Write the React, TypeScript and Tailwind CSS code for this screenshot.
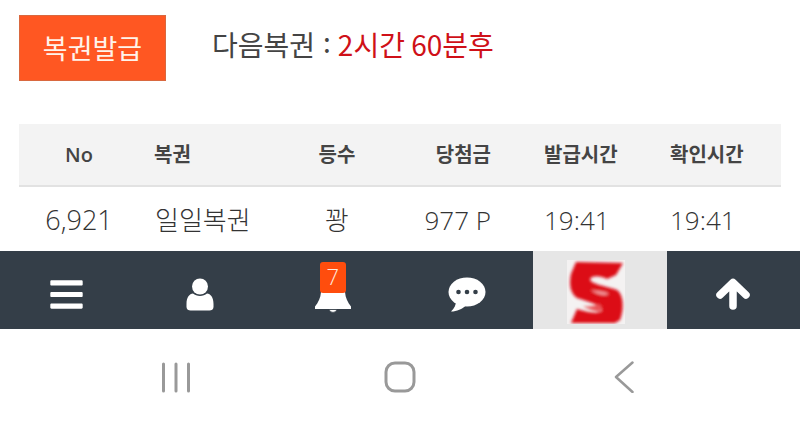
import React from 'react';
import { FaBars } from 'react-icons/fa';

const fontStack = '[font-family:"Open_Sans","Noto_Sans_CJK_KR",sans-serif]';
const cjkStack = '[font-family:"Noto_Sans_CJK_KR",sans-serif]';

const columns = 'grid grid-cols-[120px_135px_126px_126px_126px_129px]';

const UserIcon = () => (
  <svg width="28" height="33" viewBox="0 0 28 33" fill="#fff">
    <circle cx="14" cy="8.5" r="8" />
    <path d="M7 15.500c3.500 3.200 10.500 3.200 14 0 3.500.5 6.500 3.500 6.500 10.500v3c0 2.500-2 3.500-4 3.500h-19c-2 0-4-1-4-3.500v-3c0-7 3-10 6.500-10.500z" />
  </svg>
);

const BellIcon = () => (
  <svg width="36" height="21" viewBox="0 0 36 21" fill="#fff">
    <path d="M6 0h24c.5 6 2.500 10 6 14.500V17H0v-2.500C3.500 10 5.500 6 6 0z" />
    <path d="M14 17.500a4.200 4.200 0 0 0 8 0z" stroke="#343e48" strokeWidth="0.8" />
  </svg>
);

const ChatIcon = () => (
  <svg width="38" height="35" viewBox="0 0 38 35" fill="#fff">
    <ellipse cx="19" cy="15" rx="18.500" ry="14.500" />
    <path d="M8 24c0 4-1.500 7-5 10.500 6 0 11-2.500 15-6z" />
    <circle cx="10.500" cy="15" r="2.300" fill="#343e48" />
    <circle cx="19" cy="15" r="2.300" fill="#343e48" />
    <circle cx="27.500" cy="15" r="2.300" fill="#343e48" />
  </svg>
);

const ArrowIcon = () => (
  <svg width="34" height="32" viewBox="0 0 34 32" fill="none" stroke="#fff" strokeWidth="7.500" strokeLinecap="round" strokeLinejoin="round">
    <path d="M17 28V5M4 17 17 4.500 30 17" />
  </svg>
);

const LogoS = () => (
  <div className="flex h-[64px] w-[58px] items-center justify-center bg-[#f4f2f2]">
    <svg width="58" height="64" viewBox="0 0 58 64">
      <defs>
        <filter id="logoBlur" x="-10%" y="-10%" width="120%" height="120%">
          <feGaussianBlur stdDeviation="1.400" />
        </filter>
      </defs>
      <g filter="url(#logoBlur)">
        <path
          d="M9 2 L56 3 L49 15 L40 19 C34 16 26 15 23 19 C23 24 38 26 50 30 C57 35 57 50 53 60 L48 63 L4 63 L10 49 C16 51 30 55 35 51 C36 46 26 43 10 38 C3 33 2 24 4 14 Z"
          fill="#dc0c14"
        />
        <path d="M24 30 C30 31 38 31 42 34 C38 36 30 35 24 30 Z" fill="#f3999d" />
        <path d="M16 46 C22 47 28 46 32 44 C36 47 35 50 33 52 C28 51 20 49 16 46 Z" fill="#ea5257" />
      </g>
    </svg>
  </div>
);

export default function App() {
  return (
    <div className={`h-[422px] w-[800px] overflow-hidden bg-white ${fontStack}`}>
      <div className="flex h-[124px] items-start px-[19px] pt-[15px]">
        <button className={`h-[66px] w-[147px] border border-[#d9683f] bg-[#ff5722] text-[27px] text-[#fff3ea] ${cjkStack}`}>
          복권발급
        </button>
        <div className={`ml-[46px] flex h-[58px] items-center text-[28px] text-[#444] ${cjkStack}`}>
          다음복권
          <span className="ml-[8px] -translate-y-[3px]">:</span>
          <span className="ml-[7px] text-[#cf1018]">2시간 60분후</span>
        </div>
      </div>

      <div className="mx-[19px] h-[127px]">
        <div className={`${columns} h-[63px] items-center border-b-2 border-[#e2e2e2] bg-[#f3f3f3] text-[20px] font-semibold text-[#444]`}>
          <div className="text-center">No</div>
          <div className="pl-[15px]">복권</div>
          <div className="text-center">등수</div>
          <div className="pr-[35px] text-right">당첨금</div>
          <div className="pl-[18px]">발급시간</div>
          <div className="pl-[18px]">확인시간</div>
        </div>
        <div className={`${columns} h-[64px] items-center pt-[2px] text-[26px] font-light text-[#333]`}>
          <div className="text-center text-[27px]">6,921</div>
          <div className="pl-[16px]">일일복권</div>
          <div className="text-center">꽝</div>
          <div className="pr-[35px] text-right">977 P</div>
          <div className="pl-[18px]">19:41</div>
          <div className="pl-[18px]">19:41</div>
        </div>
      </div>

      <div className="grid h-[78px] grid-cols-6 bg-[#343e48]">
        <div className="flex items-center justify-center pt-[8px]">
          <FaBars size={37} color="#fff" />
        </div>
        <div className="flex items-center justify-center pt-[9px]">
          <UserIcon />
        </div>
        <div className="relative flex items-end justify-center pb-[16px]">
          <BellIcon />
          <div className="absolute left-[53px] top-[11px] flex h-[31px] w-[26px] items-start justify-center rounded-[3px] bg-[#ff4d0d] pt-[3px] text-[22px] font-light leading-none text-[#ffe9dc]">
            7
          </div>
        </div>
        <div className="flex items-center justify-center pt-[8px]">
          <ChatIcon />
        </div>
        <div className="flex items-center justify-center bg-[#e6e6e6] pr-[8px] pt-[4px]">
          <LogoS />
        </div>
        <div className="flex items-center justify-center pt-[8px]">
          <ArrowIcon />
        </div>
      </div>

      <div className="flex h-[93px] items-start justify-between pl-[160px] pr-[165px] pt-[32px]">
        <svg width="32" height="32" viewBox="0 0 32 32" fill="none" stroke="#999" strokeWidth="3" strokeLinecap="round">
          <path d="M3.500 3v27M16 3v27M28.500 3v27" />
        </svg>
        <svg className="-translate-x-[3px]" width="32" height="32" viewBox="0 0 32 32" fill="none" stroke="#999" strokeWidth="3">
          <rect x="2" y="2" width="28" height="28" rx="9" />
        </svg>
        <svg width="21" height="32" viewBox="0 0 21 32" fill="none" stroke="#999" strokeWidth="2.500" strokeLinecap="round" strokeLinejoin="round">
          <path d="M18.500 1.500 2 16l16.500 15" />
        </svg>
      </div>
    </div>
  );
}
